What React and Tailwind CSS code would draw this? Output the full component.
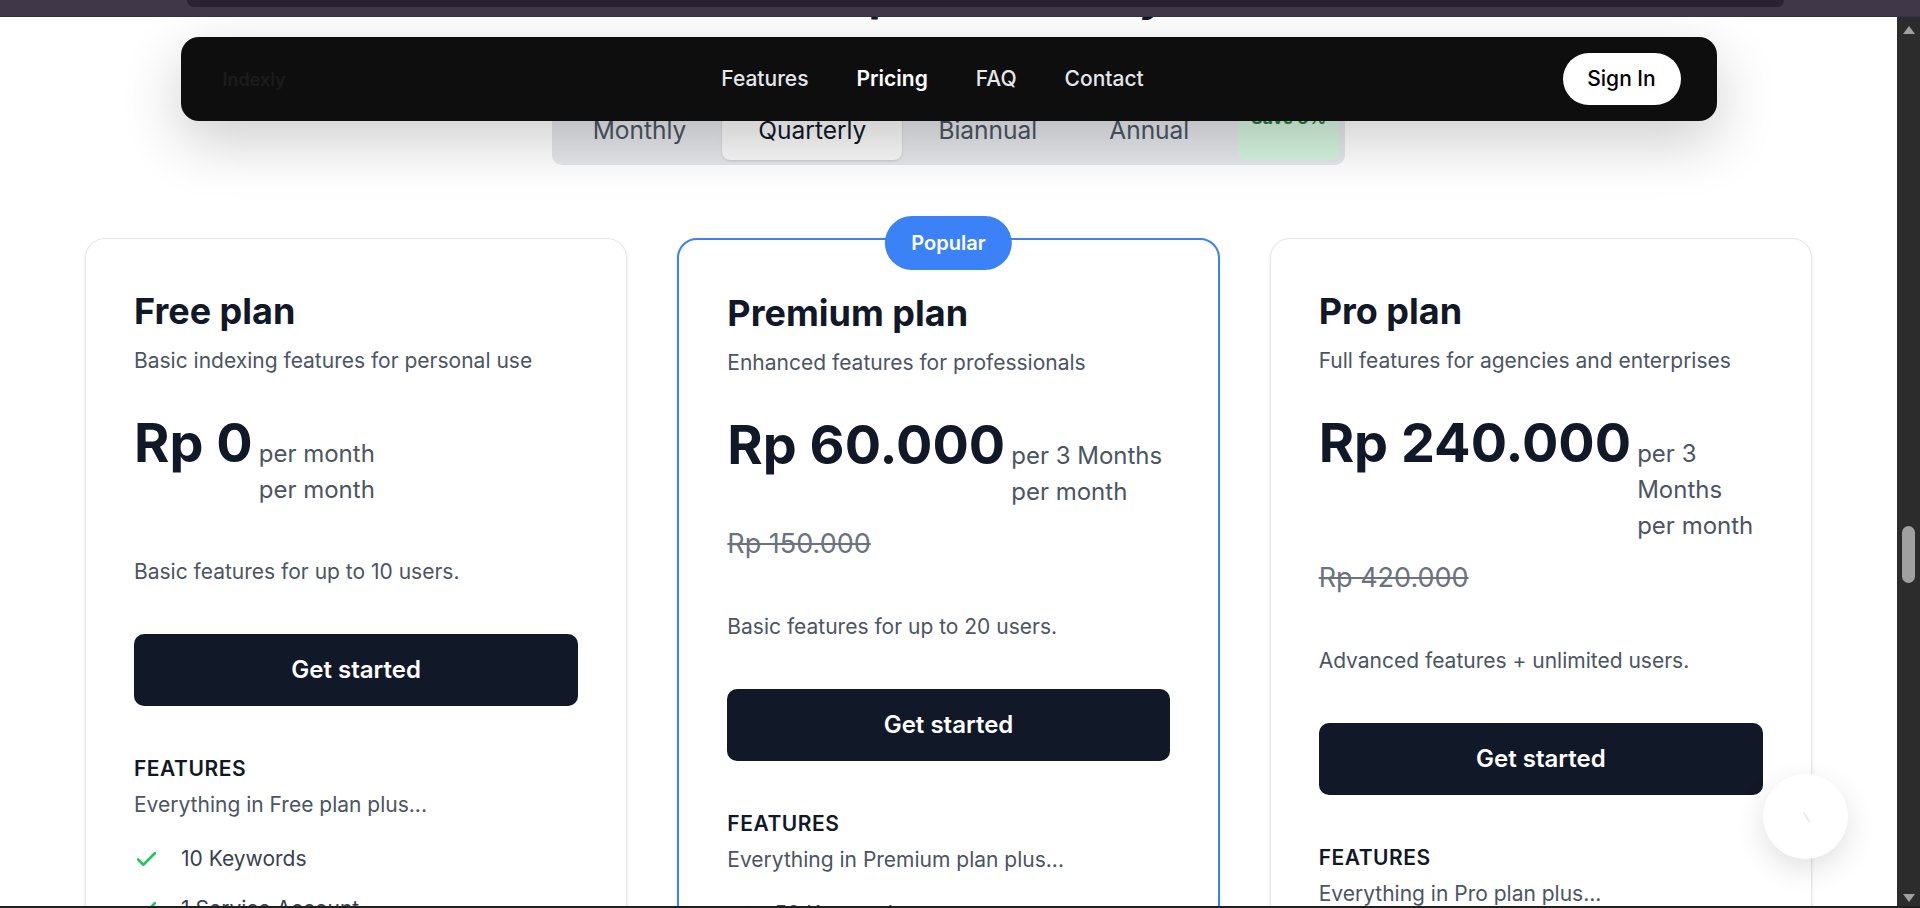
import { Check } from 'lucide-react';

const plans = [
  {
    name: 'Free plan',
    tagline: 'Basic indexing features for personal use',
    price: 'Rp 0',
    period: 'per month',
    original: null,
    summary: 'Basic features for up to 10 users.',
    lead: 'Everything in Free plan plus...',
    features: ['10 Keywords', '1 Service Account', 'Daily indexing report'],
  },
  {
    name: 'Premium plan',
    tagline: 'Enhanced features for professionals',
    price: 'Rp 60.000',
    period: 'per 3 Months',
    original: 'Rp 150.000',
    summary: 'Basic features for up to 20 users.',
    lead: 'Everything in Premium plan plus...',
    features: ['50 Keywords', '5 Service Accounts', 'Priority indexing'],
    popular: true,
  },
  {
    name: 'Pro plan',
    tagline: 'Full features for agencies and enterprises',
    price: 'Rp 240.000',
    period: 'per 3 Months',
    original: 'Rp 420.000',
    summary: 'Advanced features + unlimited users.',
    lead: 'Everything in Pro plan plus...',
    features: ['Unlimited Keywords', 'Unlimited Service Accounts', 'Dedicated support'],
  },
];

const tabs = ['Monthly', 'Quarterly', 'Biannual', 'Annual'];

function PlanCard({ plan }) {
  return (
    <div
      className={
        plan.popular
          ? 'relative rounded-[20px] border-2 border-[#3b82f6] bg-white px-[48px] pt-[53px] pb-[48px] shadow-sm'
          : 'relative rounded-[20px] border border-[#e5e7eb] bg-white px-[48px] pt-[52px] pb-[48px] shadow-sm'
      }
    >
      {plan.popular && (
        <div className="absolute -top-[24px] left-1/2 -translate-x-1/2 h-[54px] px-[26px] flex items-center rounded-full bg-[#3b82f6] text-white text-[20px] font-semibold">
          Popular
        </div>
      )}

      <h3 className="text-[36px] leading-[40px] font-bold text-[#111827]">{plan.name}</h3>
      <p className="mt-[15px] text-[21px] leading-[30px] text-[#4b5563]">{plan.tagline}</p>

      <div className="mt-[40px] flex items-baseline gap-[6px]">
        <span className="shrink-0 whitespace-nowrap text-[54px] leading-[54px] font-bold text-[#111827]">
          {plan.price}
        </span>
        <div className="text-[24px] leading-[36px] text-[#4b5563]">
          <div>{plan.period}</div>
          <div>per month</div>
        </div>
      </div>

      {plan.original && (
        <div className="mt-[15px] text-[27px] leading-[37.5px] text-[#6b7280] line-through">{plan.original}</div>
      )}

      <p className="mt-[49px] text-[21px] leading-[30px] text-[#4b5563]">{plan.summary}</p>

      <button className="mt-[47px] h-[72px] w-full rounded-[10px] bg-[#111827] text-white text-[24px] font-semibold">
        Get started
      </button>

      <div className="mt-[48px] text-[21px] leading-[30px] font-semibold tracking-wide text-[#111827]">FEATURES</div>
      <p className="mt-[6px] text-[21px] leading-[30px] text-[#4b5563]">{plan.lead}</p>

      <ul className="mt-[24px] flex flex-col gap-[20px]">
        {plan.features.map((f) => (
          <li key={f} className="flex items-center gap-[22px] text-[21px] leading-[30px] text-[#374151]">
            <Check size={25} strokeWidth={2.5} className="shrink-0 text-[#22c55e]" />
            {f}
          </li>
        ))}
      </ul>
    </div>
  );
}

export default function App() {
  return (
    <div className="relative flex h-[908px] w-[1920px] flex-col overflow-hidden bg-white font-['Inter',sans-serif]">
      {/* window chrome strip */}
      <div className="flex h-[17px] shrink-0 border-b border-[#363040] bg-[#403748] pl-[187px] pr-[136px]">
        <div className="h-[7px] flex-1 rounded-b-[8px] bg-[#2a2233]" />
      </div>

      <div className="flex min-h-0 flex-1">
        <div className="relative flex-1 overflow-hidden">
          <h2 className="-mt-[44px] text-center text-[44px] leading-[44px] font-bold text-[#111827]">
            Choose the plan for every need
          </h2>

          {/* billing period tabs */}
          <div className="mx-auto mt-[78px] flex w-fit rounded-[10px] bg-[#e5e7eb] p-[5px] pr-[6px]">
            {tabs.map((t) => (
              <div
                key={t}
                className={
                  t === 'Quarterly'
                    ? 'flex h-[60px] items-center rounded-[8px] bg-[#fafafa] px-[36px] text-[24.5px] text-[#111827] shadow-sm'
                    : 'flex h-[60px] items-center px-[36px] text-[24.5px] text-[#4b5563]'
                }
              >
                {t}
              </div>
            ))}
            <div className="ml-[13px] h-[60px] w-[101px] rounded-[8px] bg-[#d5f5df] pt-[5px] text-center text-[17.5px] font-bold text-[#15803d]">
              Save 5%
            </div>
          </div>

          {/* plan cards */}
          <div className="mx-auto mt-[73px] grid w-[1727px] grid-cols-3 items-start gap-[50px]">
            {plans.map((p) => (
              <PlanCard key={p.name} plan={p} />
            ))}
          </div>

          {/* floating nav */}
          <nav className="absolute left-1/2 top-[20px] flex h-[84px] w-[1536px] -translate-x-1/2 items-center justify-between rounded-[18px] bg-[#0e0e0e] pl-[42px] pr-[36px] shadow-[0_20px_60px_rgba(0,0,0,0.2)]">
            <div className="w-[80px] text-[18px] font-semibold text-[#1c1c1c]">Indexly</div>
            <div className="flex items-center gap-[48px] text-[21px] font-medium text-[#e5e7eb]">
              <span>Features</span>
              <span className="font-semibold text-white">Pricing</span>
              <span>FAQ</span>
              <span>Contact</span>
            </div>
            <button className="h-[52px] w-[118px] rounded-full bg-white text-[21px] font-medium text-black">Sign In</button>
          </nav>

          {/* floating action button */}
          <div className="absolute bottom-[47px] right-[49px] flex h-[85px] w-[85px] items-center justify-center rounded-full bg-white shadow-[0_10px_30px_rgba(0,0,0,0.12)]">
            <svg width="24" height="24" viewBox="0 0 24 24" fill="none" stroke="#ececec" strokeWidth="2" strokeLinecap="round">
              <path d="M10 8l5 8" />
            </svg>
          </div>
        </div>

        {/* scrollbar */}
        <div className="flex w-[23px] shrink-0 flex-col items-center bg-[#2c2c2c] pt-[9px] pb-[4px]">
          <div className="h-0 w-0 border-x-[6px] border-b-[8px] border-x-transparent border-b-[#a0a0a0]" />
          <div className="mt-[492px] h-[57px] w-[13px] rounded-full bg-[#a0a0a0]" />
          <div className="mt-auto h-0 w-0 border-x-[6px] border-t-[8px] border-x-transparent border-t-[#a0a0a0]" />
        </div>
      </div>

      <div className="h-[2px] shrink-0 bg-[#1f1f1f]" />
    </div>
  );
}
